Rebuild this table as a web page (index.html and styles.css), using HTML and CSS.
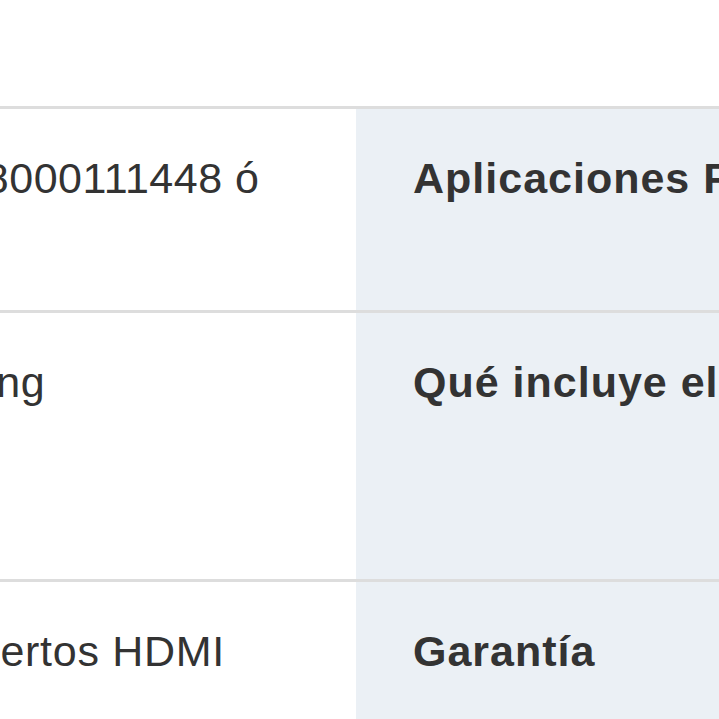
FILE: index.html
```html
<!DOCTYPE html>
<html lang="es">
<head>
<meta charset="utf-8">
<title>Especificaciones</title>
<link rel="stylesheet" href="styles.css">
</head>
<body>
<div class="viewport">
  <table class="specs">
    <colgroup>
      <col class="col-value">
      <col class="col-label">
      <col class="col-far">
    </colgroup>
    <tbody>
      <tr>
        <td class="value shift-phone">018000111448 ó</td>
        <th class="label">Aplicaciones Preinstaladas</th>
        <td class="value far">Netflix, YouTube,<br>Prime Video</td>
      </tr>
      <tr>
        <td class="value shift-brand">Samsung</td>
        <th class="label">Qué incluye el empaque</th>
        <td class="value far">Control remoto,<br>cable de poder,<br>manual de usuario</td>
      </tr>
      <tr>
        <td class="value shift-ports">3 puertos HDMI</td>
        <th class="label">Garantía</th>
        <td class="value far">1 año<br>con el fabricante</td>
      </tr>
    </tbody>
  </table>
</div>
</body>
</html>
```

FILE: styles.css
```css
html, body {
  margin: 0;
  padding: 0;
  background: #ffffff;
  overflow: hidden;
}

.viewport {
  width: 719px;
  height: 719px;
  overflow: hidden;
  padding-top: 106px;
  box-sizing: border-box;
}

.specs {
  border-collapse: separate;
  border-spacing: 0;
  table-layout: fixed;
  width: 1326px;
  font-family: "Liberation Sans", Arial, sans-serif;
  font-size: 43px;
  line-height: 64.5px;
  color: #333333;
}

.col-value { width: 356px; }
.col-label { width: 557px; }
.col-far { width: 413px; }

.specs td,
.specs th {
  border-top: 3px solid #dddddd;
  padding: 37px 0 35px 0;
  vertical-align: top;
  text-align: left;
  white-space: nowrap;
  overflow: visible;
}

.value {
  font-weight: normal;
  letter-spacing: 0.5px;
  background: #ffffff;
}

.label {
  padding-left: 57px !important;
  font-weight: bold;
  letter-spacing: 1px;
  background: #ebf0f5;
}

.far {
  padding-left: 57px !important;
}

.shift-phone { text-indent: -64px; }
.shift-brand { text-indent: -140px; }
.shift-ports { text-indent: -86px; letter-spacing: 0.7px; }
```
